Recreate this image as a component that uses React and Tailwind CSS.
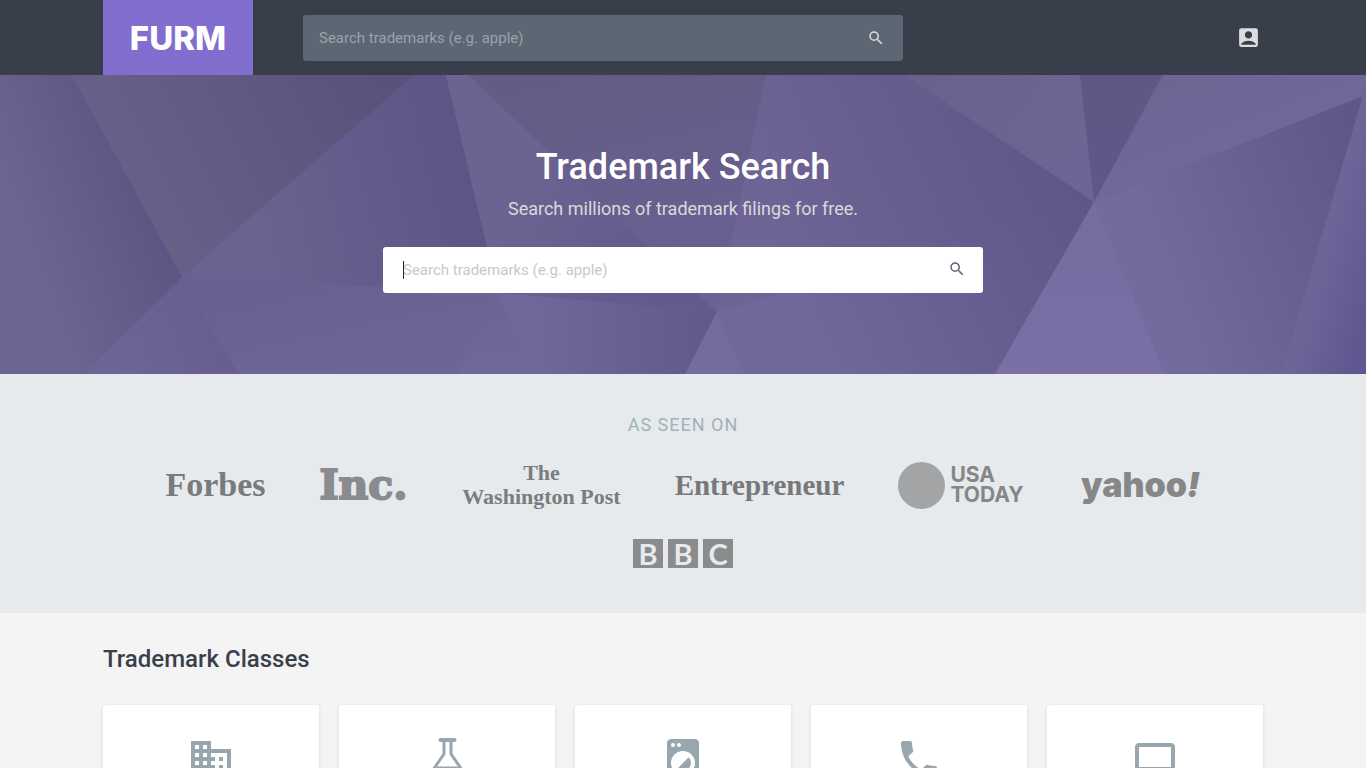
import { useState } from "react";
import { MdAccountBox, MdBusiness, MdComputer, MdLocalLaundryService, MdPhone, MdSearch } from "react-icons/md";

function FlaskIcon({ className }) {
  return (
    <svg viewBox="0 0 48 48" className={className} fill="none" stroke="currentColor" strokeWidth="3" strokeLinecap="round" aria-hidden="true">
      <path d="M17.500 5h14" strokeWidth="4" />
      <path d="M21 5v14L7.500 38.500c-1.500 2.500 0 5 3 5h28c3 0 4.500-2.500 3-5L28 19V5" strokeLinejoin="round" />
      <path d="M13 32.500h23" strokeWidth="2" />
    </svg>
  );
}

const classes = [
  { name: "Business", href: "#business", Icon: MdBusiness },
  { name: "Chemicals", href: "#chemicals", Icon: FlaskIcon },
  { name: "Appliances", href: "#appliances", Icon: MdLocalLaundryService },
  { name: "Communications", href: "#communications", Icon: MdPhone },
  { name: "Computers", href: "#computers", Icon: MdComputer },
];

// points, gradient line (x1 y1 x2 y2), start and end colours
const facets = [
  { points: "0,0 72,0 182,202 85,299 0,299", line: [30, 180, 165, 130], from: "#6c6491", to: "#5c5382" },
  { points: "72,0 415,0 182,202", line: [150, 110, 370, 0], from: "#675f88", to: "#5b527c" },
  { points: "182,202 415,0 446,0 498,218", line: [260, 180, 470, 130], from: "#6b6292", to: "#5e5586" },
  { points: "182,202 498,218 457,299 238,299", line: [300, 202, 320, 299], from: "#696091", to: "#6d6597" },
  { points: "182,202 238,299 85,299", line: [120, 299, 225, 260], from: "#6d6595", to: "#675e8f" },
  { points: "446,0 468,0 717,237 498,218", line: [500, 150, 650, 220], from: "#6b6391", to: "#635a8d" },
  { points: "468,0 766,0 717,237", line: [600, 0, 650, 230], from: "#645c85", to: "#6a6195" },
  { points: "498,218 530,299 457,299", line: [498, 218, 498, 299], from: "#6c6395", to: "#70689b" },
  { points: "498,218 717,237 685,299 530,299", line: [530, 260, 700, 260], from: "#70679b", to: "#62598d" },
  { points: "717,237 745,299 685,299", line: [717, 237, 717, 299], from: "#736a9d", to: "#746b9f" },
  { points: "766,0 905,0 1094,127 717,237", line: [800, 240, 1090, 110], from: "#6e6596", to: "#5f5688" },
  { points: "905,0 1080,0 1094,127", line: [940, 0, 1080, 100], from: "#6a618d", to: "#6e6596" },
  { points: "1080,0 1163,0 1094,127", line: [1090, 0, 1100, 120], from: "#605786", to: "#605789" },
  { points: "1163,0 1366,0 1366,20 1094,127", line: [1200, 0, 1230, 80], from: "#6f6595", to: "#70689a" },
  { points: "717,237 1094,127 995,299 745,299", line: [800, 240, 1090, 110], from: "#70679a", to: "#5f5688" },
  { points: "1094,127 1165,299 995,299", line: [1090, 140, 1080, 299], from: "#756c9f", to: "#7a70a7" },
  { points: "1094,127 1366,20 1366,299 1165,299", line: [1150, 190, 1366, 110], from: "#736a9e", to: "#5f5689" },
  { points: "1366,10 1366,299 1281,299", line: [1310, 230, 1366, 245], from: "#6d6498", to: "#605790" },
];

function HeroBackground() {
  return (
    <svg className="absolute inset-0 -z-10 h-full w-full bg-[#696092]" viewBox="0 0 1366 299" preserveAspectRatio="none" aria-hidden="true">
      <defs>
        {facets.map(({ line, from, to }, i) => (
          <linearGradient key={i} id={`facet-${i}`} gradientUnits="userSpaceOnUse" x1={line[0]} y1={line[1]} x2={line[2]} y2={line[3]}>
            <stop offset="0" stopColor={from} />
            <stop offset="1" stopColor={to} />
          </linearGradient>
        ))}
      </defs>
      {facets.map((facet, i) => (
        <polygon key={i} points={facet.points} fill={`url(#facet-${i})`} />
      ))}
    </svg>
  );
}

function HeaderSearch() {
  const [query, setQuery] = useState("");

  return (
    <form role="search" onSubmit={(e) => e.preventDefault()} className="flex h-[46px] w-full max-w-[600px] items-center rounded-[3px] bg-[#5d6673] pr-[18px] pl-4 text-[#d9dbde]">
      <input
        type="text"
        aria-label="Search trademarks"
        placeholder="Search trademarks (e.g. apple)"
        value={query}
        onChange={(e) => setQuery(e.target.value)}
        className="h-full min-w-0 flex-1 bg-transparent text-[15px] text-white outline-none placeholder:text-[#98a3ab]"
      />
      <button type="submit" aria-label="Search">
        <MdSearch className="size-[18px]" />
      </button>
    </form>
  );
}

function HeroSearch() {
  const [query, setQuery] = useState("");

  return (
    <form role="search" onSubmit={(e) => e.preventDefault()} className="relative flex h-[46px] w-full max-w-[600px] items-center rounded-[3px] bg-white pr-[17px] pl-5 text-[#5d6673]">
      {query === "" && <span className="absolute top-[14px] left-5 h-[18px] w-px bg-[#222]" />}
      <input
        type="text"
        aria-label="Search trademarks"
        placeholder="Search trademarks (e.g. apple)"
        value={query}
        onChange={(e) => setQuery(e.target.value)}
        className="h-full min-w-0 flex-1 bg-transparent text-[15px] text-[#222] outline-none placeholder-shown:caret-transparent placeholder:text-[#c8c8c8]"
        autoFocus
      />
      <button type="submit" aria-label="Search" className="pb-0.5">
        <MdSearch className="size-[18px]" />
      </button>
    </form>
  );
}

function Press() {
  return (
    <div className="flex flex-wrap items-center justify-center gap-x-[53px] gap-y-[30px] whitespace-nowrap">
      <div className="flex w-[100px] justify-center font-['Liberation_Serif',serif] text-[34px] leading-[40px] font-bold text-[#797a7b]">Forbes</div>
      <div className="flex w-[90px] justify-center font-['DejaVu_Serif',serif] text-[41px] leading-[40px] font-bold text-[#8a8b8d] [-webkit-text-stroke:2px_#8a8b8d]">Inc.</div>
      <div className="flex w-[160px] flex-col items-center font-['Liberation_Serif',serif] text-[22px] leading-6 font-bold text-[#7b7c7d]">
        <span>The</span>
        <span>Washington Post</span>
      </div>
      <div className="flex w-[170px] justify-center font-['Liberation_Serif',serif] text-[29px] leading-[40px] font-bold text-[#777879]">Entrepreneur</div>
      <div className="flex w-[130px] items-center gap-1.5 text-[#858687]">
        <div className="size-[47px] shrink-0 rounded-full bg-[#a3a4a5]" />
        <div className="font-[Inter,sans-serif] text-[21px] leading-5 font-bold">
          USA<br />TODAY
        </div>
      </div>
      <div className="flex w-[120px] justify-center font-[Inter,sans-serif] text-[34px] leading-[40px] font-black text-[#868788]">
        yahoo<span className="italic">!</span>
      </div>
      <div className="flex w-[100px] justify-between font-[Lato,sans-serif] text-[29px] leading-[29px] font-bold text-[#e6eaec]">
        <span className="w-[30px] bg-[#8a8b8c] text-center">B</span>
        <span className="w-[30px] bg-[#8a8b8c] text-center">B</span>
        <span className="w-[30px] bg-[#8a8b8c] text-center">C</span>
      </div>
    </div>
  );
}

export default function App() {
  return (
    <div className="min-h-screen bg-[#f4f4f4] font-[Roboto,sans-serif] text-[#38404b]">
      <header className="bg-[#383f4a]">
        <div className="mx-auto flex max-w-[1160px] items-center">
          <a href="#home" className="flex h-[75px] w-[150px] shrink-0 items-center justify-center bg-[#816ecf] pt-0.5 font-[Inter,sans-serif] text-[33px] font-extrabold text-white">FURM</a>
          <div className="ml-[50px] flex-1">
            <HeaderSearch />
          </div>
          <a href="#account" aria-label="Account" className="text-[#dcdde0]">
            <MdAccountBox className="mr-0.5 size-[25px]" />
          </a>
        </div>
      </header>

      <section className="relative isolate flex flex-col items-center px-4 pt-[70px] pb-[81px]">
        <HeroBackground />
        <h1 className="text-[36px] leading-[44px] font-medium text-white">Trademark Search</h1>
        <p className="mt-[7px] mb-[25px] text-[18px] leading-[26px] text-[#dadada]">Search millions of trademark filings for free.</p>
        <HeroSearch />
      </section>

      <section className="bg-[#e6eaec] pt-10 pb-[45px]">
        <div className="mx-auto max-w-[1160px]">
          <h2 className="mb-[25px] text-center text-[18px] leading-[22px] tracking-[1px] text-[#9fb3ba]">AS SEEN ON</h2>
          <Press />
        </div>
      </section>

      <section className="mx-auto max-w-[1160px] pt-[30px] pb-8">
        <h2 className="mb-[30px] text-[24px] leading-8 font-medium">Trademark Classes</h2>
        <div className="grid grid-cols-5 gap-5">
          {classes.map(({ name, href, Icon }) => (
            <a key={name} href={href} aria-label={name} className="flex justify-center rounded-[3px] bg-white py-[30px] text-[#98a7ae] shadow-[0_1px_4px_rgba(0,0,0,0.1)]">
              <Icon className="size-12" />
            </a>
          ))}
        </div>
      </section>
    </div>
  );
}
